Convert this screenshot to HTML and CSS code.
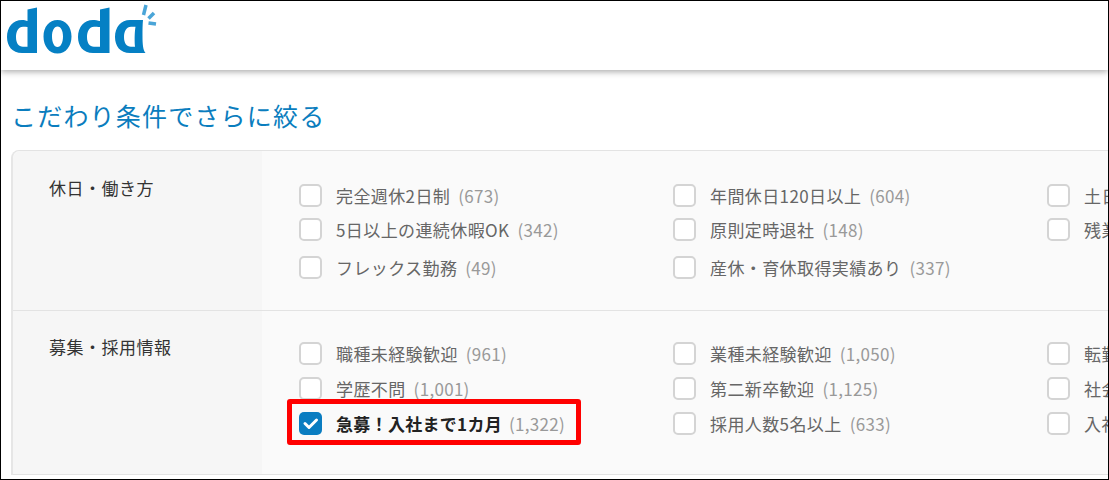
FILE: index.html
```html
<!DOCTYPE html>
<html lang="ja">
<head>
<meta charset="utf-8">
<title>doda</title>
<link rel="stylesheet" href="styles.css">
</head>
<body>
<div class="frame">
  <header class="header">
    <svg class="logo" width="160" height="60" viewBox="0 0 160 60" aria-label="doda">
      <g class="logo-blue" fill-rule="evenodd">
        <path d="M27.5 9.5 L37 7.5 V53 H22 C12 53 7 46 7 37 C7 27 13 20 22 20 C24 20 26 20.5 27.5 21 Z M27.5 27 C26 26.7 24.5 26.7 23 26.7 C18.5 26.7 16 31 16 37 C16 43 18.5 46.8 23 46.8 H27.5 Z"/>
        <path d="M57.5 20 C66 20 71.5 27 71.5 36.5 C71.5 46 66 53.5 57.5 53.5 C49 53.5 43.5 46 43.5 36.5 C43.5 27 49 20 57.5 20 Z M57.5 26.5 C54 26.5 52 31 52 36.5 C52 42 54 47 57.5 47 C61 47 63 42 63 36.5 C63 31 61 26.5 57.5 26.5 Z"/>
        <path d="M100 9.5 L109.5 7.5 V53 H93 C83 53 78 46 78 37 C78 27 84 20 93 20 C95 20 98 20.5 100 21 Z M100 27 C98 26.7 95.5 26.7 94 26.7 C89.5 26.7 87 31 87 37 C87 43 89.5 46.8 94 46.8 H100 Z"/>
        <path d="M130 20 H143 C142.5 25 142.5 30 142.5 36 C142.5 44 143 50 145.5 53 H130 C120 53 115 46 115 37 C115 27 121 20 130 20 Z M131 26.7 C126.5 26.7 124 31 124 37 C124 43 126.5 46.8 131 46.8 H135 C134.5 42 134.5 32 135.5 26.7 Z"/>
      </g>
      <g class="logo-spark">
        <path d="M146 5 L143.5 15"/>
        <path d="M154 13 L148.5 18.5"/>
        <path d="M156 24 L148.5 23"/>
      </g>
    </svg>
  </header>
  <h1 class="title">こだわり条件でさらに絞る</h1>
  <div class="panel">
    <section class="group group-a">
      <h2 class="group-label">休日・働き方</h2>
      <div class="options">
        <div class="row">
          <label class="opt"><span class="box"></span>完全週休2日制<span class="count">(673)</span></label>
          <label class="opt"><span class="box"></span>年間休日120日以上<span class="count">(604)</span></label>
          <label class="opt"><span class="box"></span>土日祝休み<span class="count">(512)</span></label>
        </div>
        <div class="row">
          <label class="opt"><span class="box"></span>5日以上の連続休暇OK<span class="count">(342)</span></label>
          <label class="opt"><span class="box"></span>原則定時退社<span class="count">(148)</span></label>
          <label class="opt"><span class="box"></span>残業月20時間以内<span class="count">(420)</span></label>
        </div>
        <div class="row row-last">
          <label class="opt"><span class="box"></span>フレックス勤務<span class="count">(49)</span></label>
          <label class="opt"><span class="box"></span>産休・育休取得実績あり<span class="count">(337)</span></label>
        </div>
      </div>
    </section>
    <section class="group group-b">
      <h2 class="group-label">募集・採用情報</h2>
      <div class="options">
        <div class="row">
          <label class="opt"><span class="box"></span>職種未経験歓迎<span class="count">(961)</span></label>
          <label class="opt"><span class="box"></span>業種未経験歓迎<span class="count">(1,050)</span></label>
          <label class="opt"><span class="box"></span>転勤なし<span class="count">(803)</span></label>
        </div>
        <div class="row">
          <label class="opt"><span class="box"></span>学歴不問<span class="count">(1,001)</span></label>
          <label class="opt"><span class="box"></span>第二新卒歓迎<span class="count">(1,125)</span></label>
          <label class="opt"><span class="box"></span>社会人経験不問<span class="count">(655)</span></label>
        </div>
        <div class="row">
          <label class="opt opt-checked">
            <span class="highlight"></span>
            <span class="box box-checked">
              <svg width="23" height="23" viewBox="0 0 23 23"><path class="tick" d="M6 11.5 L10 15.5 L17.5 8"/></svg>
            </span>急募！入社まで1カ月<span class="count">(1,322)</span>
          </label>
          <label class="opt"><span class="box"></span>採用人数5名以上<span class="count">(633)</span></label>
          <label class="opt"><span class="box"></span>入社祝い金あり<span class="count">(210)</span></label>
        </div>
      </div>
    </section>
  </div>
</div>
</body>
</html>
```
FILE: styles.css
```css
* { box-sizing: border-box; }
html, body { margin: 0; padding: 0; background: #fff; }
.frame {
  width: 1109px;
  height: 480px;
  border: 1px solid #000;
  overflow: hidden;
  font-family: "Noto Sans CJK JP", "Noto Sans", sans-serif;
  position: relative;
}
.header {
  height: 70px;
  background: #fff;
  box-shadow: 0 2px 6px rgba(0,0,0,.32);
  position: relative;
}
.logo { display: block; margin: -1px 0 0 -1px; }
.logo-blue { fill: #0580c4; }
.logo-spark path { fill: none; stroke: #4aa5d8; stroke-width: 3.5; }
.title {
  margin: 27px 0 0 10px;
  font-size: 25px;
  line-height: 36px;
  font-weight: 400;
  letter-spacing: 1.2px;
  color: #0a7dbe;
  white-space: nowrap;
}
.panel {
  margin: 17px 0 0 10px;
  width: 1400px;
  border-top: 1px solid #e3e3e3;
  border-left: 2px solid #e6e6e6;
  border-radius: 8px 0 0 0;
  background: #fafafa;
}
.group { display: flex; border-bottom: 1px solid #e3e3e3; }
.group-a { height: 160px; }
.group-b { height: 164px; }
.group-label {
  flex: 0 0 249px;
  margin: 0;
  padding: 25px 0 0 36px;
  background: #f6f6f6;
  font-size: 17px;
  line-height: 24px;
  font-weight: 400;
  letter-spacing: .5px;
  color: #333;
}
.group-a .group-label { border-top-left-radius: 8px; }
.options { padding: 27px 0 0 37px; }
.group-b .options { padding-top: 25px; }
.group-b .group-label { padding-top: 24px; }
.row { display: flex; height: 34px; align-items: center; }
.group-b .row { height: 35px; }
.row-last { margin-top: 4px; }
.opt {
  position: relative;
  flex: 0 0 374px;
  display: flex;
  align-items: center;
  font-size: 17px;
  letter-spacing: .4px;
  color: #666;
  white-space: nowrap;
}
.box {
  flex: 0 0 23px;
  width: 23px;
  height: 23px;
  margin-right: 14px;
  border: 2px solid #d4d4d4;
  border-radius: 5px;
  background: #fff;
}
.box-checked {
  border: 0;
  background: #0a7dc1;
  position: relative;
}
.box-checked svg { display: block; }
.tick { fill: none; stroke: #fff; stroke-width: 3; stroke-linecap: round; stroke-linejoin: round; }
.count { margin-left: 8px; color: #999; letter-spacing: .3px; }
.opt-checked { color: #222; font-weight: 700; letter-spacing: .3px; }
.opt-checked .count { font-weight: 400; margin-left: 7px; }
.highlight {
  position: absolute;
  left: -12px;
  top: -12px;
  width: 294px;
  height: 46px;
  border: 5px solid #f00;
  border-radius: 3px;
  pointer-events: none;
}
```
